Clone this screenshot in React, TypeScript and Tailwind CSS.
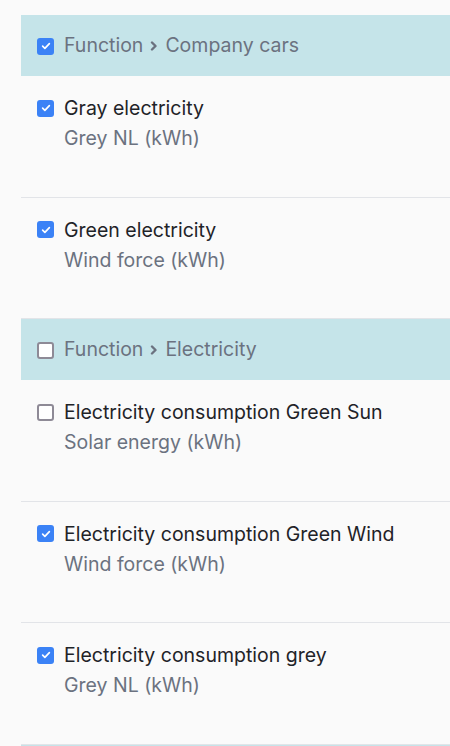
import React from "react";

type Item = { title: string; sub: string; checked: boolean };
type Group = { name: string; checked: boolean; items: Item[] };

const groups: Group[] = [
  {
    name: "Company cars",
    checked: true,
    items: [
      { title: "Gray electricity", sub: "Grey NL (kWh)", checked: true },
      { title: "Green electricity", sub: "Wind force (kWh)", checked: true },
    ],
  },
  {
    name: "Electricity",
    checked: false,
    items: [
      { title: "Electricity consumption Green Sun", sub: "Solar energy (kWh)", checked: false },
      { title: "Electricity consumption Green Wind", sub: "Wind force (kWh)", checked: true },
      { title: "Electricity consumption grey", sub: "Grey NL (kWh)", checked: true },
    ],
  },
];

function Box({ checked }: { checked: boolean }) {
  if (checked) {
    return (
      <span className="flex h-[17px] w-[17px] shrink-0 items-center justify-center rounded-[3px] bg-[#3b82f6]">
        <svg viewBox="0 0 16 16" className="h-3 w-3" fill="none">
          <path d="M3.5 8.2l3 3 6-6.4" stroke="white" strokeWidth="2.2" strokeLinecap="round" strokeLinejoin="round" />
        </svg>
      </span>
    );
  }
  return <span className="h-[17px] w-[17px] shrink-0 rounded-[3px] border-2 border-[#8e8a96] bg-white" />;
}

export default function App() {
  return (
    <div className="h-[746px] overflow-hidden bg-[#fafafa] pl-[21px] pt-[15px] font-['Inter',sans-serif] text-[19.5px]">
      {groups.map((g) => (
        <div key={g.name}>
          <div className="flex h-[61px] items-center gap-[10px] bg-[#c5e4e9] pl-[16px] pt-[1px] text-[#6b7280]">
            <Box checked={g.checked} />
            <span className="flex items-center gap-[6px]">
              Function
              <svg viewBox="0 0 10 10" className="h-[10px] w-[10px]" fill="none">
                <path d="M3 1.5l3.5 3.5L3 8.5" stroke="#6b7280" strokeWidth="2.4" strokeLinecap="round" strokeLinejoin="round" />
              </svg>
              {g.name}
            </span>
          </div>
          {g.items.map((it) => (
            <div key={it.title} className="flex h-[121.5px] gap-[10px] border-b border-[#e2e4e8] pl-[16px] pt-[17px]">
              <div className="flex h-[30px] items-center">
                <Box checked={it.checked} />
              </div>
              <div className="flex flex-col leading-[30px]">
                <span className="text-[#1f2328]">{it.title}</span>
                <span className="text-[#6b7280]">{it.sub}</span>
              </div>
            </div>
          ))}
        </div>
      ))}
      <div className="h-[61px] bg-[#c5e4e9]" />
    </div>
  );
}
